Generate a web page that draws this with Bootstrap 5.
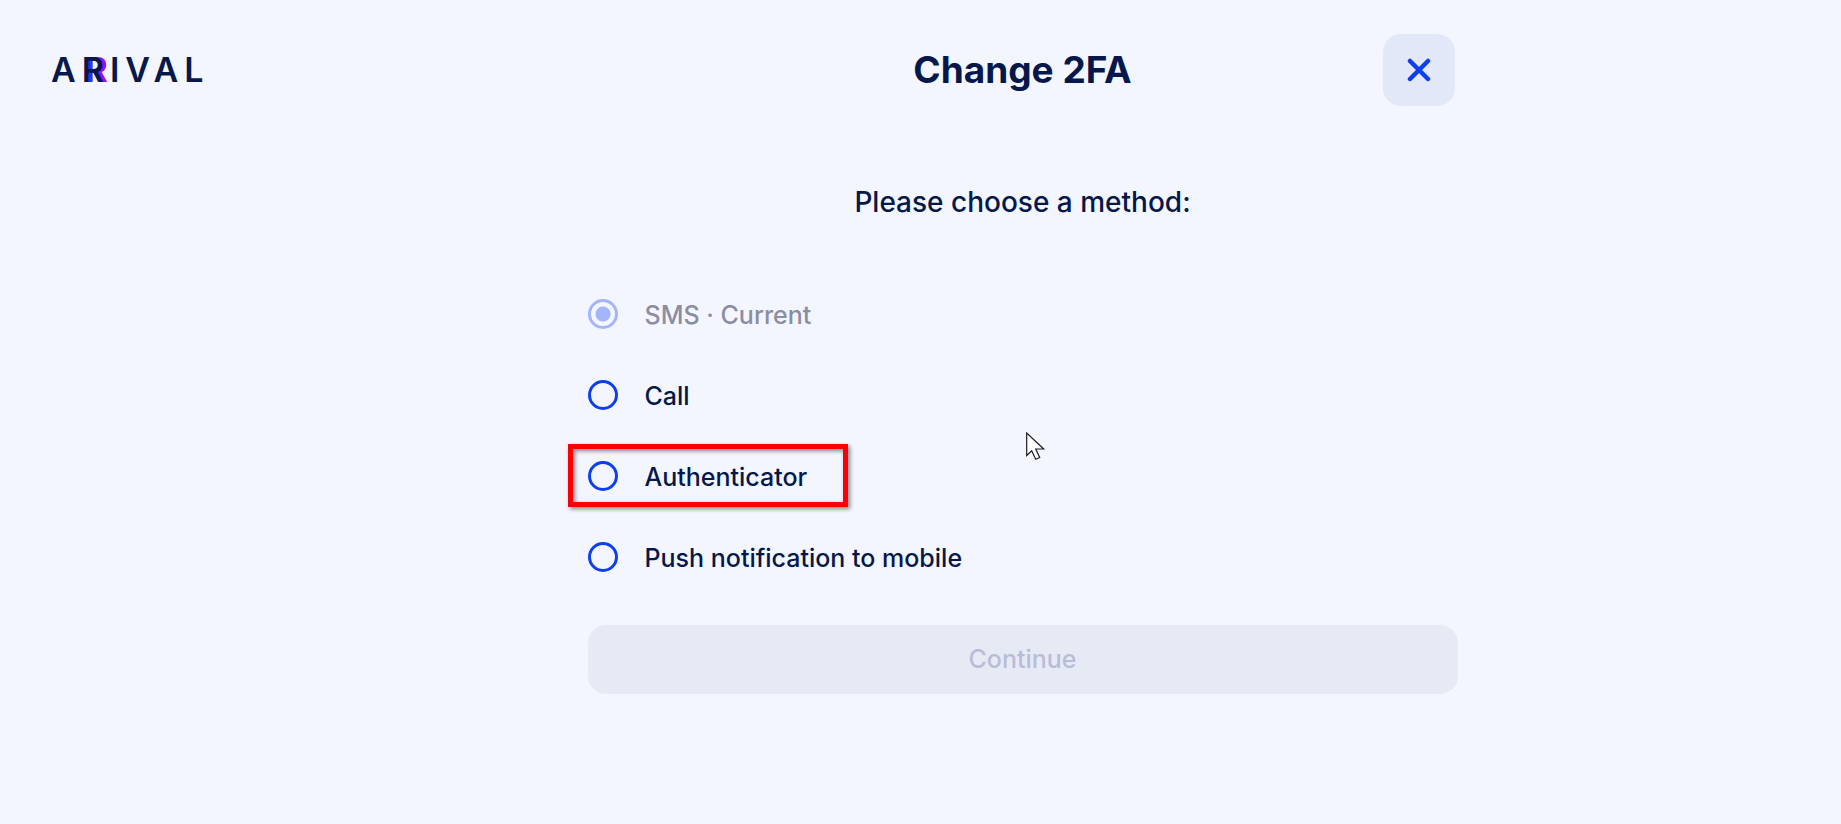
<!DOCTYPE html>
<html lang="en">
<head>
<meta charset="utf-8">
<meta name="viewport" content="width=device-width, initial-scale=1">
<title>Change 2FA</title>
<link href="https://cdn.jsdelivr.net/npm/bootstrap@5.3.0/dist/css/bootstrap.min.css" rel="stylesheet">
<style>
:root { --ink: #06174a; --brand: #0d3ff0; --canvas: #f3f6fe; }
body { background: var(--canvas); color: var(--ink); font-family: Inter, "Open Sans", sans-serif; }
.brand-side { width: 204px; padding: 48px 0 0 51px; }
.brand-logo { font: 600 34px/44px Inter, sans-serif; letter-spacing: 6px; color: #07184a; white-space: nowrap; }
.brand-logo:hover { color: #07184a; }
.logo-r { position: relative; z-index: 0; }
.logo-r::before { content: "R"; position: absolute; left: 4px; top: 0; z-index: -1; line-height: 41px; letter-spacing: 0;
  background: linear-gradient(90deg, #2433ff 30%, #9b0cf0 70%); -webkit-background-clip: text; background-clip: text; color: transparent; }
.panel { max-width: 870px; }
.panel-head { display: grid; grid-template-columns: 72px 1fr 72px; align-items: center; padding: 34px 3px 0; }
.panel-head h1 { grid-column: 2; font-size: 37px; line-height: 50px; font-weight: 700; }
.close-btn { width: 72px; height: 72px; border: 0; border-radius: 18px; background: #e3e8f9; }
.prompt { font-size: 28px; line-height: 40px; font-weight: 500; margin: 76px 0 51px; }
.choice { position: relative; height: 81px; display: flex; align-items: center; gap: 27px; }
.choice .form-check-input { width: 30px; height: 30px; margin: 0; border: 3px solid var(--brand); background: none; flex: none; box-shadow: none; }
.choice .form-check-input:checked { border-color: #a3b6fc; background: radial-gradient(circle, #a3b6fc 7px, transparent 8px); opacity: 1; }
.choice label, .choice .form-check-input:disabled ~ label { font-size: 25px; line-height: 36px; font-weight: 500; padding-top: 2px; opacity: 1; }
.choice .form-check-input:disabled ~ label { color: #8b8da3; }
.marker { position: absolute; left: -20px; top: 9px; width: 280px; height: 63px; border: 5px solid #fb0000; filter: drop-shadow(2px 2px 2px #0007); pointer-events: none; }
.go-btn, .go-btn:disabled { height: 69px; border: 0; border-radius: 18px; background: #e6eaf5; color: #babcd7; opacity: 1; font-size: 25px; font-weight: 500; margin-top: 28px; }
.pointer { position: absolute; left: 438px; top: -3px; }
</style>
</head>
<body>
<div class="d-flex min-vh-100">
  <header class="brand-side flex-shrink-0">
    <a href="#" class="brand-logo d-block text-decoration-none">A<span class="logo-r">R</span>IVAL</a>
  </header>
  <main class="flex-grow-1">
    <div class="panel mx-auto">
      <div class="panel-head">
        <h1 class="text-center mb-0">Change 2FA</h1>
        <button type="button" class="close-btn d-flex align-items-center justify-content-center p-0" aria-label="Close">
          <svg width="24" height="24" viewBox="0 0 24 24" fill="none" stroke="#0d3ff0" stroke-width="4.500" stroke-linecap="round"><path d="M3 3l18 18M21 3L3 21"/></svg>
        </button>
      </div>
      <form>
        <p class="prompt text-center">Please choose a method:</p>
        <div class="choices">
          <div class="choice"><input class="form-check-input" type="radio" name="method" id="sms" checked disabled><label for="sms">SMS · Current</label></div>
          <div class="choice"><input class="form-check-input" type="radio" name="method" id="call"><label for="call">Call</label></div>
          <div class="choice"><input class="form-check-input" type="radio" name="method" id="auth"><label for="auth">Authenticator</label><span class="marker"></span>
            <svg class="pointer" width="20" height="30" viewBox="0 0 20 30"><path d="M.7 1v22.500l5-4.800 4 8.500 4-1.700-4-8.500h8z" fill="#fff" stroke="#1b1c24" stroke-width="1.200"/></svg>
          </div>
          <div class="choice"><input class="form-check-input" type="radio" name="method" id="push"><label for="push">Push notification to mobile</label></div>
        </div>
        <button type="submit" class="go-btn btn w-100" disabled>Continue</button>
      </form>
    </div>
  </main>
</div>
<script src="https://cdn.jsdelivr.net/npm/bootstrap@5.3.0/dist/js/bootstrap.bundle.min.js"></script>
</body>
</html>
